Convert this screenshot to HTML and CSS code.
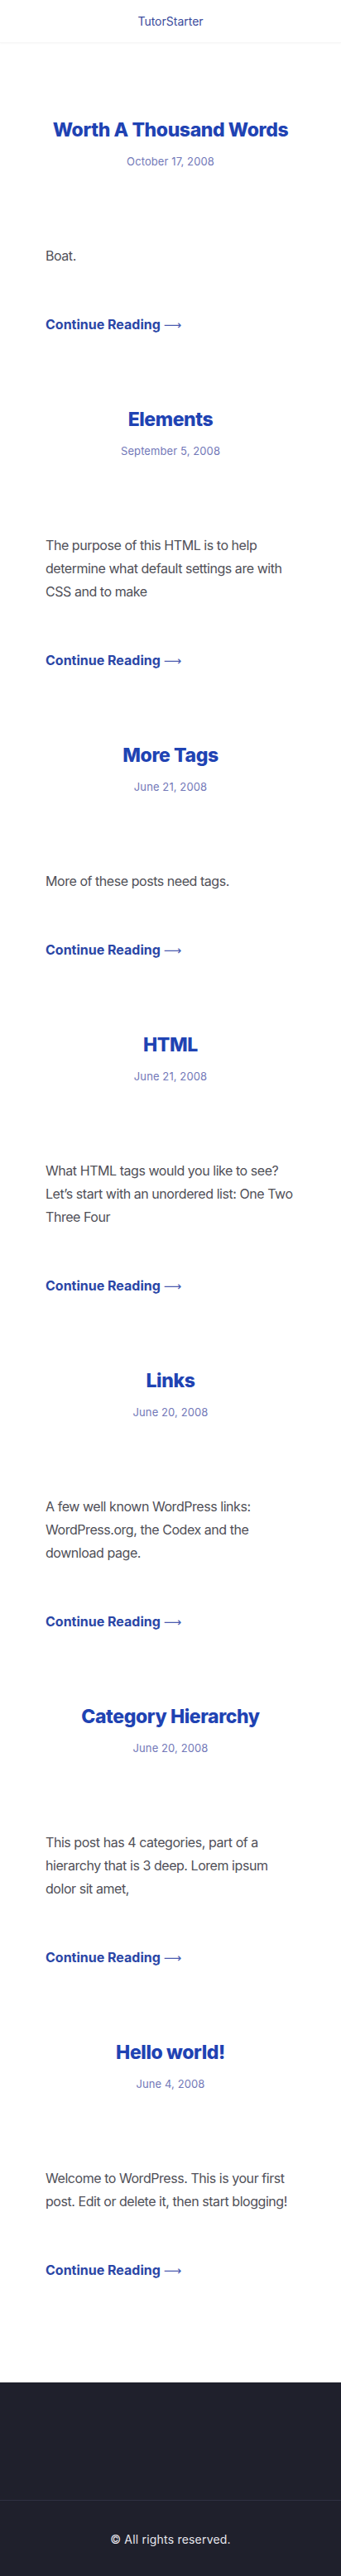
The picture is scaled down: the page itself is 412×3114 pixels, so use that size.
FILE: index.html
```html
<!DOCTYPE html>
<html lang="en">
<head>
<meta charset="utf-8">
<meta name="viewport" content="width=device-width, initial-scale=1">
<title>TutorStarter</title>
<link rel="stylesheet" href="styles.css">
</head>
<body>
<header class="site-header">
  <a class="brand" href="#">TutorStarter</a>
</header>
<main class="posts">
  <article class="post">
    <h2 class="post-title">Worth A Thousand Words</h2>
    <div class="post-date">October 17, 2008</div>
    <p class="post-excerpt">Boat.</p>
    <a class="read-more" href="#">Continue Reading <span class="arrow">⟶</span></a>
  </article>
  <article class="post">
    <h2 class="post-title">Elements</h2>
    <div class="post-date">September 5, 2008</div>
    <p class="post-excerpt">The purpose of this HTML is to help determine what default settings are with CSS and to make</p>
    <a class="read-more" href="#">Continue Reading <span class="arrow">⟶</span></a>
  </article>
  <article class="post">
    <h2 class="post-title">More Tags</h2>
    <div class="post-date">June 21, 2008</div>
    <p class="post-excerpt">More of these posts need tags.</p>
    <a class="read-more" href="#">Continue Reading <span class="arrow">⟶</span></a>
  </article>
  <article class="post">
    <h2 class="post-title">HTML</h2>
    <div class="post-date">June 21, 2008</div>
    <p class="post-excerpt">What HTML tags would you like to see? Let’s start with an unordered list: One Two Three Four</p>
    <a class="read-more" href="#">Continue Reading <span class="arrow">⟶</span></a>
  </article>
  <article class="post">
    <h2 class="post-title">Links</h2>
    <div class="post-date">June 20, 2008</div>
    <p class="post-excerpt">A few well known WordPress links: WordPress.org, the Codex and the download page.</p>
    <a class="read-more" href="#">Continue Reading <span class="arrow">⟶</span></a>
  </article>
  <article class="post">
    <h2 class="post-title">Category Hierarchy</h2>
    <div class="post-date">June 20, 2008</div>
    <p class="post-excerpt">This post has 4 categories, part of a hierarchy that is 3 deep. Lorem ipsum dolor sit amet,</p>
    <a class="read-more" href="#">Continue Reading <span class="arrow">⟶</span></a>
  </article>
  <article class="post">
    <h2 class="post-title">Hello world!</h2>
    <div class="post-date">June 4, 2008</div>
    <p class="post-excerpt">Welcome to WordPress. This is your first post. Edit or delete it, then start blogging!</p>
    <a class="read-more" href="#">Continue Reading <span class="arrow">⟶</span></a>
  </article>
</main>
<footer class="site-footer">
  <div class="footer-widgets"></div>
  <div class="footer-bottom">© All rights reserved.</div>
</footer>
</body>
</html>
```
FILE: styles.css
```css
* { box-sizing: border-box; }
html, body { margin: 0; padding: 0; }
body {
  font-family: Inter, "Noto Sans", "Liberation Sans", sans-serif;
  background: #ffffff;
  color: #4a4a55;
}
.site-header {
  height: 52px;
  display: flex;
  align-items: center;
  justify-content: center;
  box-shadow: 0 1px 2px rgba(0, 0, 0, 0.03);
  border-bottom: 1px solid #f6f6f7;
}
.brand {
  font-size: 14px;
  color: #3b4b9c;
  text-decoration: none;
}
.posts {
  padding: 89px 55px 123px;
  display: flex;
  flex-direction: column;
  gap: 86px;
}
.post {
  display: flex;
  flex-direction: column;
}
.post-title {
  margin: 0;
  text-align: center;
  font-size: 23px;
  line-height: 32px;
  font-weight: 800;
  letter-spacing: -0.4px;
  color: #1f43b3;
}
.post-date {
  margin-top: 12px;
  text-align: center;
  font-size: 13px;
  line-height: 20px;
  letter-spacing: 0.1px;
  color: #7278b8;
}
.post-excerpt {
  margin: 90px 0 0;
  font-size: 16px;
  line-height: 28px;
  letter-spacing: -0.45px;
  color: #505058;
}
.read-more {
  margin-top: 57px;
  font-size: 16px;
  line-height: 24px;
  font-weight: 700;
  color: #2a46a6;
  text-decoration: none;
}
.arrow {
  font-family: "DejaVu Sans", sans-serif;
  font-weight: 400;
  font-size: 15px;
  color: #4a5bb0;
}
.site-footer {
  background: #1f202c;
  color: #e6e6ec;
}
.footer-widgets {
  height: 143px;
  border-bottom: 1px solid #2f3142;
}
.footer-bottom {
  height: 92px;
  display: flex;
  align-items: center;
  justify-content: center;
  font-size: 14px;
  letter-spacing: 0.2px;
}
```
